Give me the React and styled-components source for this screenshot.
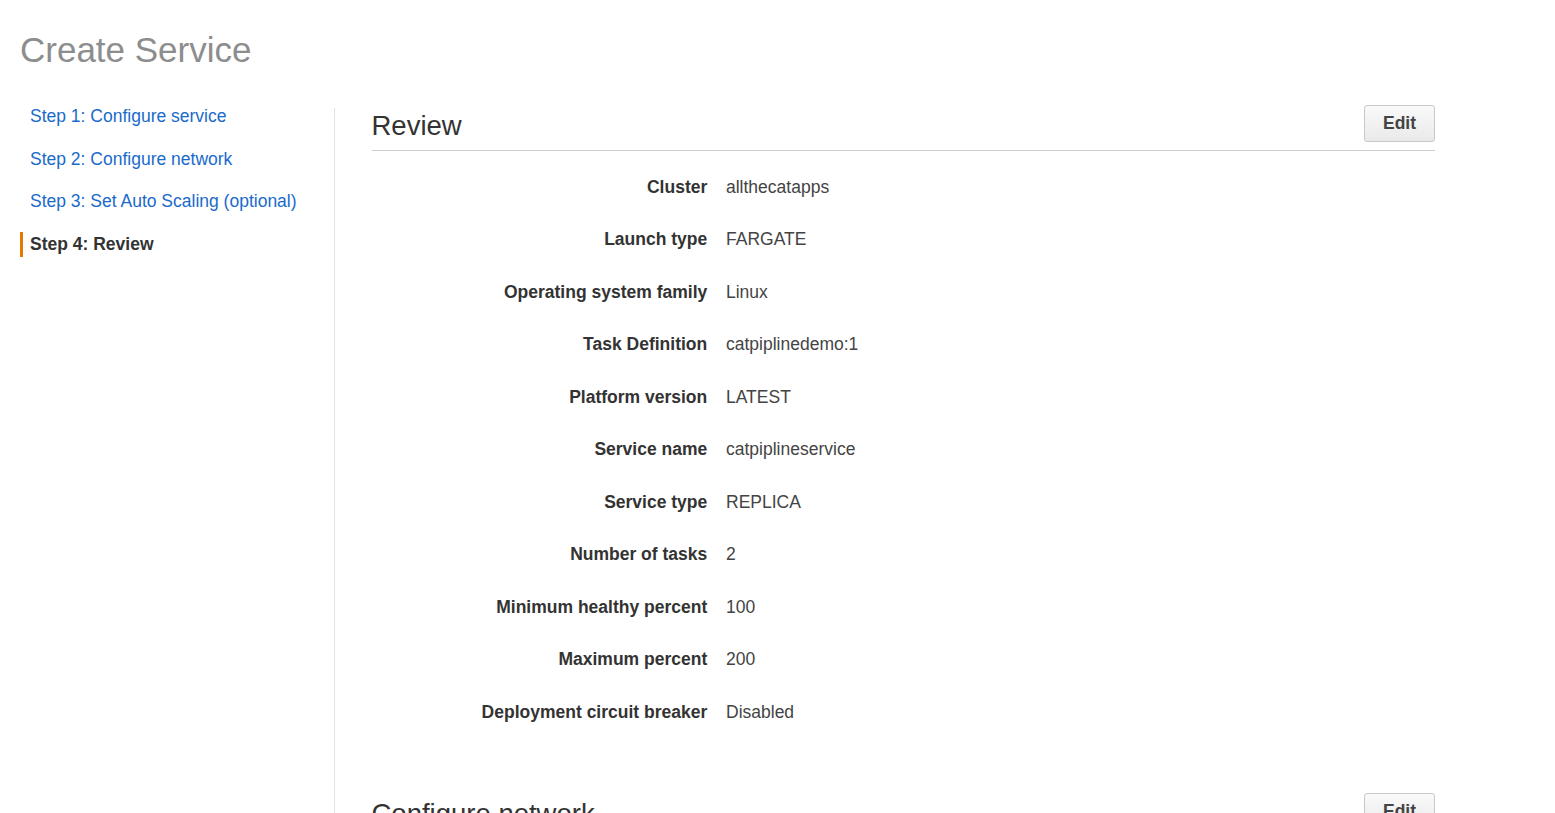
import React from 'react'
import styled, { createGlobalStyle } from 'styled-components'

const GlobalStyle = createGlobalStyle`
  html, body {
    margin: 0;
    padding: 0;
    background: #fff;
    font-family: "Liberation Sans", Arial, sans-serif;
    color: #444;
  }
  body {
    overflow: hidden;
    height: 813px;
  }
`

const Page = styled.div`
  padding: 29px 20px 0 20px;
`

const PageTitle = styled.h1`
  margin: 0;
  font-size: 35px;
  line-height: 42px;
  font-weight: 400;
  color: #8d8d8d;
`

const Layout = styled.div`
  display: flex;
  margin-top: 33px;
`

const Sidebar = styled.nav`
  width: 314px;
  flex-shrink: 0;
  display: flex;
  flex-direction: column;
  gap: 17.5px;
`

const StepLink = styled.a`
  display: block;
  padding-left: 7px;
  border-left: 3px solid ${props => props.active ? '#e07b00' : 'transparent'};
  font-size: 17.5px;
  line-height: 25px;
  font-weight: ${props => props.active ? 700 : 400};
  color: ${props => props.active ? '#333' : '#1a6acb'};
  text-decoration: none;
  cursor: pointer;
`

const Content = styled.main`
  flex: 1;
  position: relative;
  padding-left: 37.5px;
  padding-right: 100px;
  &:before {
    content: "";
    position: absolute;
    left: 0;
    top: 3.5px;
    height: 1000px;
    border-left: 1px solid #e3e3e3;
  }
`

const Section = styled.section`
  margin-bottom: 53px;
`

const SectionHeader = styled.div`
  display: flex;
  align-items: center;
  justify-content: space-between;
  padding-bottom: 7px;
  border-bottom: 1px solid #cfcfcf;
`

const SectionTitle = styled.h2`
  margin: 0;
  font-size: 27.5px;
  line-height: 34px;
  font-weight: 400;
  color: #333;
  padding-top: 5px;
`

const EditButton = styled.button`
  width: 71px;
  height: 37px;
  padding: 0;
  border: 1px solid #c8c8c8;
  border-radius: 3px;
  background: linear-gradient(#fafafa, #e9e9e9);
  font-family: "Liberation Sans", Arial, sans-serif;
  font-size: 17.5px;
  font-weight: 700;
  color: #444;
  cursor: pointer;
`

const Rows = styled.dl`
  margin: 0;
  padding-top: 10px;
  display: grid;
  grid-template-columns: 1fr 2fr;
`

const Label = styled.dt`
  text-align: right;
  padding: 13.75px 18.75px 13.75px 0;
  font-size: 17.5px;
  line-height: 25px;
  font-weight: 700;
  color: #333;
`

const Value = styled.dd`
  margin: 0;
  padding: 13.75px 0;
  font-size: 17.5px;
  line-height: 25px;
  color: #444;
`

const steps = [
  'Step 1: Configure service',
  'Step 2: Configure network',
  'Step 3: Set Auto Scaling (optional)',
  'Step 4: Review',
]

const review = [
  ['Cluster', 'allthecatapps'],
  ['Launch type', 'FARGATE'],
  ['Operating system family', 'Linux'],
  ['Task Definition', 'catpiplinedemo:1'],
  ['Platform version', 'LATEST'],
  ['Service name', 'catpiplineservice'],
  ['Service type', 'REPLICA'],
  ['Number of tasks', '2'],
  ['Minimum healthy percent', '100'],
  ['Maximum percent', '200'],
  ['Deployment circuit breaker', 'Disabled'],
]

export default function App() {
  return (
    <Page>
      <GlobalStyle />
      <PageTitle>Create Service</PageTitle>
      <Layout>
        <Sidebar>
          {steps.map((step, i) => (
            <StepLink key={step} active={i === steps.length - 1}>{step}</StepLink>
          ))}
        </Sidebar>
        <Content>
          <Section>
            <SectionHeader>
              <SectionTitle>Review</SectionTitle>
              <EditButton>Edit</EditButton>
            </SectionHeader>
            <Rows>
              {review.map(([label, value]) => (
                <React.Fragment key={label}>
                  <Label>{label}</Label>
                  <Value>{value}</Value>
                </React.Fragment>
              ))}
            </Rows>
          </Section>
          <Section>
            <SectionHeader>
              <SectionTitle>Configure network</SectionTitle>
              <EditButton>Edit</EditButton>
            </SectionHeader>
          </Section>
        </Content>
      </Layout>
    </Page>
  )
}
